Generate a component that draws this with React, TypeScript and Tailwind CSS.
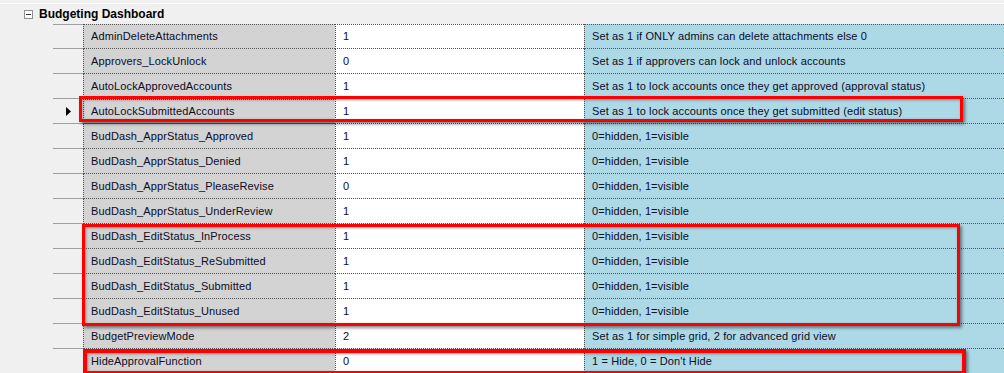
import React from "react";

const rows: [string, string, string][] = [
  ["AdminDeleteAttachments", "1", "Set as 1 if ONLY admins can delete attachments else 0"],
  ["Approvers_LockUnlock", "0", "Set as 1 if approvers can lock and unlock accounts"],
  ["AutoLockApprovedAccounts", "1", "Set as 1 to lock accounts once they get approved (approval status)"],
  ["AutoLockSubmittedAccounts", "1", "Set as 1 to lock accounts once they get submitted (edit status)"],
  ["BudDash_ApprStatus_Approved", "1", "0=hidden, 1=visible"],
  ["BudDash_ApprStatus_Denied", "1", "0=hidden, 1=visible"],
  ["BudDash_ApprStatus_PleaseRevise", "0", "0=hidden, 1=visible"],
  ["BudDash_ApprStatus_UnderReview", "1", "0=hidden, 1=visible"],
  ["BudDash_EditStatus_InProcess", "1", "0=hidden, 1=visible"],
  ["BudDash_EditStatus_ReSubmitted", "1", "0=hidden, 1=visible"],
  ["BudDash_EditStatus_Submitted", "1", "0=hidden, 1=visible"],
  ["BudDash_EditStatus_Unused", "1", "0=hidden, 1=visible"],
  ["BudgetPreviewMode", "2", "Set as 1 for simple grid, 2 for advanced grid view"],
  ["HideApprovalFunction", "0", "1 = Hide, 0 = Don't Hide"],
];

export default function App() {
  return (
    <div
      className="relative w-[1004px] h-[373px] overflow-hidden bg-[#f0f0f0] text-[11px] text-[#0c0c26] tracking-[0.12px]"
      style={{ fontFamily: '"Liberation Sans", Arial, sans-serif' }}
    >
      <div className="h-[3px]" />
      <div className="h-px bg-white" />
      <div className="h-[20px] flex items-center pl-[24px]">
        <div className="w-[9px] h-[9px] border border-[#8f8f8f] bg-white flex items-center justify-center">
          <div className="w-[5px] h-px bg-[#333]" />
        </div>
        <span className="ml-[6px] font-bold text-[12px] tracking-normal text-black">Budgeting Dashboard</span>
      </div>
      <div className="flex flex-col">
        {rows.map(([name, val, desc], i) => (
          <div key={name} className="flex h-[25px]">
            <div className="w-[53px] shrink-0" />
            <div
              className={`w-[30px] shrink-0 border-b border-[#a0a0a0] flex items-center pl-[13px] ${
                i === 0 ? "border-t" : ""
              }`}
            >
              {i === 3 && (
                <svg width="5" height="9" viewBox="0 0 5 9">
                  <path d="M0 0 L5 4.5 L0 9 Z" fill="#000" />
                </svg>
              )}
            </div>
            <div
              className={`w-[252px] shrink-0 bg-[#d3d3d3] border-l border-b border-dotted border-[#555] flex items-center pl-[7px] ${
                i === 0 ? "border-t" : ""
              }`}
            >
              <span className={i === 3 ? "outline outline-1 outline-dotted outline-[#555] -ml-[7px] pl-[7px] w-[251px] h-[23px] flex items-center" : ""}>
                {name}
              </span>
            </div>
            <div
              className={`w-[249px] shrink-0 bg-white border-l border-b border-dotted border-[#555] flex items-center pl-[7px] ${
                i === 0 ? "border-t" : ""
              }`}
            >
              {val}
            </div>
            <div
              className={`flex-1 bg-[#add8e6] border-l border-b border-dotted border-[#555] flex items-center pl-[7px] ${
                i === 0 ? "border-t" : ""
              }`}
            >
              {desc}
            </div>
          </div>
        ))}
      </div>

      <div className="absolute left-[79px] top-[96px] w-[884px] h-[26px] border-[3px] border-[#ff0000] shadow-[2px_2px_3px_rgba(0,0,0,0.45),inset_1px_1px_3px_rgba(0,0,0,0.35)]" />
      <div className="absolute left-[82px] top-[224px] w-[878px] h-[102px] border-[3px] border-[#ff0000] shadow-[2px_2px_3px_rgba(0,0,0,0.45),inset_1px_1px_3px_rgba(0,0,0,0.35)]" />
      <div className="absolute left-[83px] top-[349px] w-[883px] h-[26px] border-[4px] border-[#ff0000] shadow-[2px_2px_3px_rgba(0,0,0,0.45),inset_1px_1px_3px_rgba(0,0,0,0.35)]" />
    </div>
  );
}
